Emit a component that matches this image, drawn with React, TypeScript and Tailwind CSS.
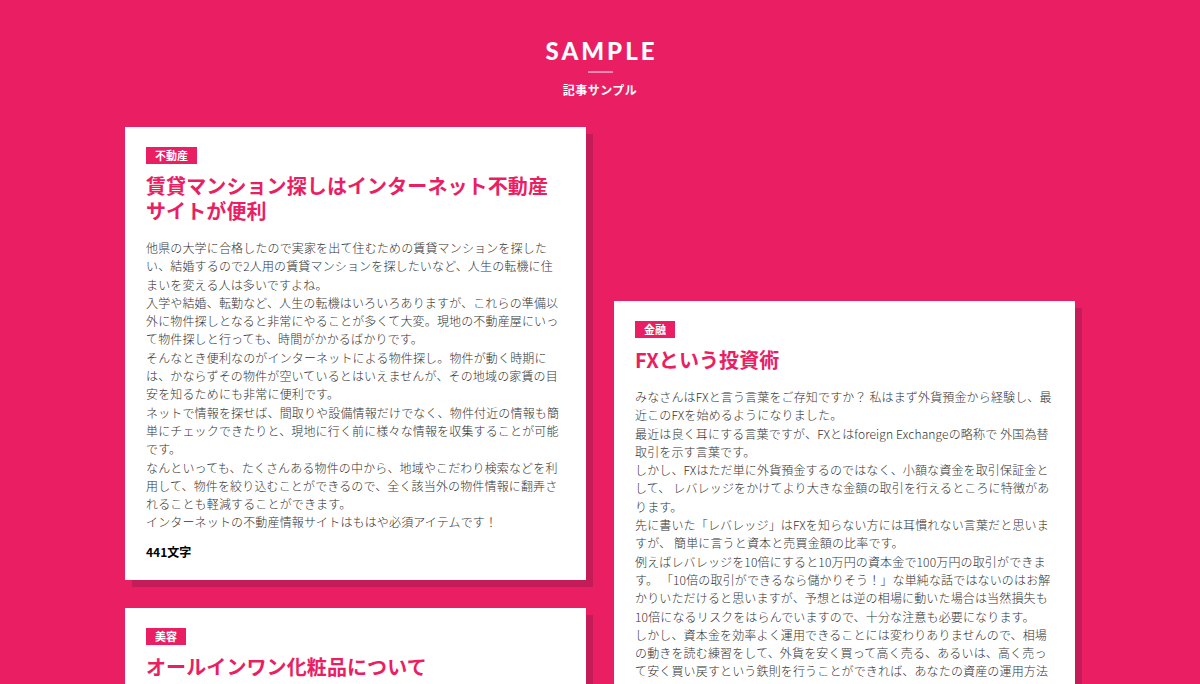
const articles = {
  realEstate: {
    tag: "不動産",
    title: "賃貸マンション探しはインターネット不動産サイトが便利",
    body: [
      "他県の大学に合格したので実家を出て住むための賃貸マンションを探したい、結婚するので2人用の賃貸マンションを探したいなど、人生の転機に住まいを変える人は多いですよね。",
      "入学や結婚、転勤など、人生の転機はいろいろありますが、これらの準備以外に物件探しとなると非常にやることが多くて大変。現地の不動産屋にいって物件探しと行っても、時間がかかるばかりです。",
      "そんなとき便利なのがインターネットによる物件探し。物件が動く時期には、かならずその物件が空いているとはいえませんが、その地域の家賃の目安を知るためにも非常に便利です。",
      "ネットで情報を探せば、間取りや設備情報だけでなく、物件付近の情報も簡単にチェックできたりと、現地に行く前に様々な情報を収集することが可能です。",
      "なんといっても、たくさんある物件の中から、地域やこだわり検索などを利用して、物件を絞り込むことができるので、全く該当外の物件情報に翻弄されることも軽減することができます。",
      "インターネットの不動産情報サイトはもはや必須アイテムです！",
    ],
    count: "441文字",
  },
  beauty: {
    tag: "美容",
    title: "オールインワン化粧品について",
    body: [
      "化粧水、美容液、乳液、クリームなど、いくつものアイテムを重ねるスキンケアは手間も時間もかかります。そこで人気なのがオールインワン化粧品です。",
      "一つで何役もこなしてくれるので、忙しい朝や疲れた夜にも手軽にお手入れができます。",
    ],
    count: "312文字",
  },
  finance: {
    tag: "金融",
    title: "FXという投資術",
    body: [
      "みなさんはFXと言う言葉をご存知ですか？ 私はまず外貨預金から経験し、最近このFXを始めるようになりました。",
      "最近は良く耳にする言葉ですが、FXとはforeign Exchangeの略称で 外国為替取引を示す言葉です。",
      "しかし、FXはただ単に外貨預金するのではなく、小額な資金を取引保証金として、 レバレッジをかけてより大きな金額の取引を行えるところに特徴があります。",
      "先に書いた「レバレッジ」はFXを知らない方には耳慣れない言葉だと思いますが、 簡単に言うと資本と売買金額の比率です。",
      "例えばレバレッジを10倍にすると10万円の資本金で100万円の取引ができます。 「10倍の取引ができるなら儲かりそう！」な単純な話ではないのはお解かりいただけると思いますが、予想とは逆の相場に動いた場合は当然損失も10倍になるリスクをはらんでいますので、十分な注意も必要になります。",
      "しかし、資本金を効率よく運用できることには変わりありませんので、相場の動きを読む練習をして、外貨を安く買って高く売る、あるいは、高く売って安く買い戻すという鉄則を行うことができれば、あなたの資産の運用方法として非常に有効な手段となります。",
    ],
    count: "498文字",
  },
};

type Article = (typeof articles)["realEstate"];

function ArticleCard({ article }: { article: Article }) {
  return (
    <div className="bg-white px-[21px] pt-[20px] pb-[19px] shadow-[7px_7px_0_#c41c58]">
      <div className="flex">
        <span className="bg-[#e91e63] px-[9px] text-[11px] leading-[17px] font-bold text-white">
          {article.tag}
        </span>
      </div>
      <h2 className="mt-[9px] text-[20px] leading-[25px] font-bold tracking-[0.1px] text-[#e91e63]">
        {article.title}
      </h2>
      <div className="mt-[16px] text-[12px] leading-[18.3px] font-light tracking-[0.15px] text-[#333]">
        {article.body.map((p, i) => (
          <p key={i}>{p}</p>
        ))}
      </div>
      <p className="mt-[11px] text-[12px] leading-[18px] font-bold text-black">
        {article.count}
      </p>
    </div>
  );
}

export default function App() {
  return (
    <div
      className="min-h-screen bg-[#e91e63]"
      style={{ fontFamily: '"Noto Sans CJK JP", "Noto Sans", sans-serif' }}
    >
      {/* Header */}
      <header className="flex flex-col items-center pt-[36px]">
        <h1
          className="pl-[3px] text-[24px] leading-[30px] font-black tracking-[3px] text-white"
          style={{ fontFamily: "Lato, sans-serif" }}
        >
          SAMPLE
        </h1>
        <div className="mt-[5px] h-[2px] w-[25px] bg-[#f38bb0]" />
        <p className="mt-[8px] text-[12px] leading-[18px] font-bold tracking-[0.5px] text-white">
          記事サンプル
        </p>
      </header>

      {/* Cards */}
      <main className="mx-auto mt-[28px] flex w-[950px] items-start gap-[28px]">
        <div className="flex w-[461px] flex-col gap-[28px]">
          <ArticleCard article={articles.realEstate} />
          <ArticleCard article={articles.beauty} />
        </div>
        <div className="flex w-[461px] flex-col gap-[28px] pt-[174px]">
          <ArticleCard article={articles.finance} />
        </div>
      </main>
    </div>
  );
}
